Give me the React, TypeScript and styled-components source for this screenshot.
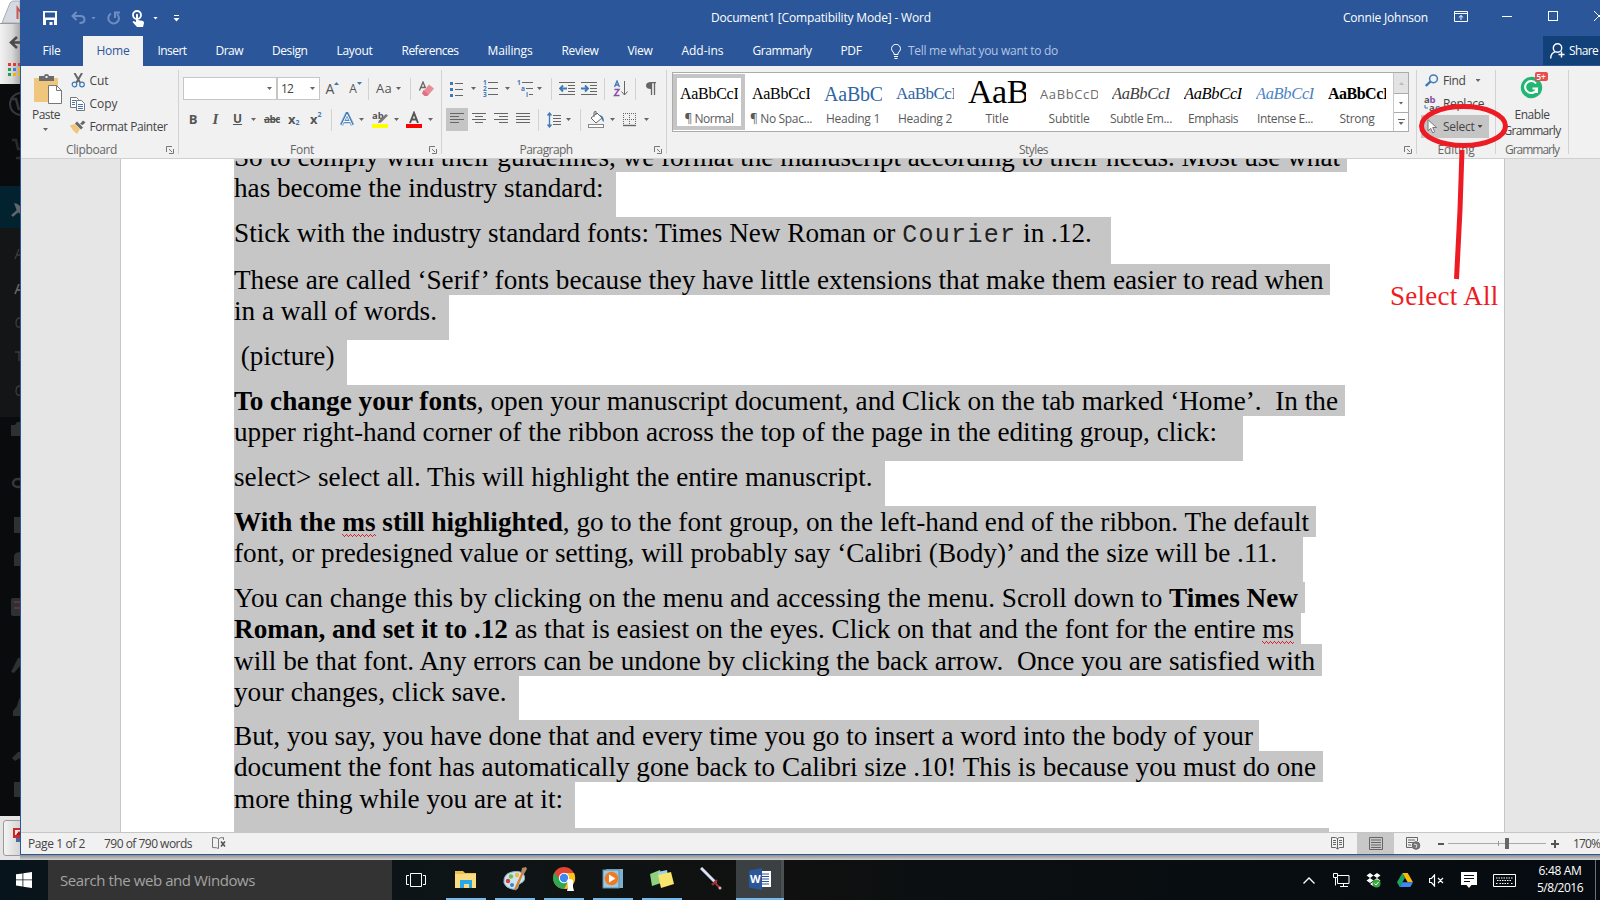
import React, { useLayoutEffect, useRef, useState } from 'react';
import styled, { createGlobalStyle, css } from 'styled-components';

const UI = `"Open Sans", "Noto Sans", sans-serif`;
const SERIF = `"Liberation Serif", serif`;
const BLUE = '#2b579a';

const Global = createGlobalStyle`
  * { box-sizing: border-box; }
  html, body { margin: 0; padding: 0; overflow: hidden; }
  body { font: 12px/16px ${UI}; color: #444; background: #0a0b0d; }
  svg { display: block; flex: none; }
`;

/* ---------- text that is tracked to a given advance width ---------- */
const FitBox = styled.span<{ $w: number }>`
  display: block;
  flex: none;
  width: ${(p) => p.$w}px;
  white-space: pre;
`;
const Fit = ({ w, children, className }: { w: number; children: React.ReactNode; className?: string }) => {
  const ref = useRef<HTMLSpanElement>(null);
  const [spacing, setSpacing] = useState(0);
  useLayoutEffect(() => {
    const el = ref.current;
    if (!el) return;
    const natural = el.getBoundingClientRect().width;
    const count = (el.textContent || '').length || 1;
    setSpacing((w - natural) / count);
  }, [w]);
  return (
    <FitBox $w={w} className={className}>
      <span ref={ref} style={{ letterSpacing: spacing }}>{children}</span>
    </FitBox>
  );
};

/* ---------- shell ---------- */
const Screen = styled.div`
  position: relative;
  width: 1600px;
  height: 900px;
  overflow: hidden;
  display: flex;
  flex-direction: column;
`;
const Desktop = styled.div`
  display: flex;
  height: 860px;
  background: linear-gradient(#8f8f8f, #d0d0d0) bottom / 100% 5px no-repeat;
`;
const Behind = styled.div`
  width: 20px;
  height: 860px;
  display: flex;
  flex-direction: column;
  overflow: hidden;
  background: #0a0b0d;
`;
const Word = styled.div`
  width: 1580px;
  height: 855px;
  display: flex;
  flex-direction: column;
  border-left: 1px solid ${BLUE};
  border-bottom: 1px solid ${BLUE};
  background: #f1f1f1;
  overflow: hidden;
`;

/* ---------- browser strip behind ---------- */
const TabStrip = styled.div`height: 24px; background: #fff; border-bottom: 1px solid #9a9a9a;`;
const BrowserBar = styled.div`
  height: 60px;
  background: linear-gradient(90deg, #f2f2f2, #d8d8d8 60%, #a8a8a8);
`;
const AdminMenu = styled.div`height: 732px; background: #0a0b0d;`;
const Downloads = styled.div`
  height: 44px;
  padding: 4px 0 4px 3px;
  background: #e4e4e4;
`;
const DownloadItem = styled.div`
  height: 36px;
  width: 30px;
  padding: 6px 0 0 9px;
  border: 1px solid #999;
  border-radius: 3px;
  background: linear-gradient(90deg, #f4f4f4, #bdbdbd);
`;

const BackgroundStrip = () => (
  <Behind>
    <TabStrip>
      <svg width="20" height="23"><path d="M2 23 L10 3 Q11 1 14 1 H20 V23Z" fill="#d5dae2" stroke="#a7abb3" /><path d="M17.500 19V8l3 4" fill="none" stroke="#c9574c" strokeWidth="2" /></svg>
    </TabStrip>
    <BrowserBar>
      <svg width="20" height="60"><path d="M17 13l-6 5.500 6 5.500M11 18.500h9" fill="none" stroke="#4a4a4a" strokeWidth="2.600" />
        {[0, 1, 2].map((r) => [0, 1, 2].map((c) => (
          <rect key={`${r}${c}`} x={8 + c * 5} y={39 + r * 5} width="3" height="3"
            fill={[['#e23b2e', '#e23b2e', '#e23b2e'], ['#1f9d57', '#3f7ee8', '#f2b400'], ['#1f9d57', '#f2b400', '#f2b400']][r][c]} />
        )))}
      </svg>
    </BrowserBar>
    <AdminMenu>
      <svg width="20" height="732">
        <rect y="102" width="20" height="42" fill="#03222f" />
        <rect y="144" width="20" height="189" fill="#131517" />
        <circle cx="21" cy="20" r="11" fill="none" stroke="#33373b" strokeWidth="2" />
        <path d="M12 15h4l3 11" fill="none" stroke="#33373b" strokeWidth="2.500" />
        <path d="M12 56h4l2 9h4M16 74h4" fill="none" stroke="#272b2f" strokeWidth="2.500" />
        <path d="M12 132l8-7" stroke="#60666a" strokeWidth="2.500" />
        <path d="M14 119q3 0 6 3v8l-3-3z" fill="#60666a" />
        <g fill="none" stroke="#3a3d40" strokeWidth="1.300">
          <path d="M15 175l4-10M17 171h3" /><path d="M15 210l4-10M17 206h3" stroke="#5d6063" strokeWidth="1.800" />
          <path d="M20 234q-4 0-4 5t4 4M15 268h5M19 268v9M20 302q-4 0-4 5t4 4" />
        </g>
        <g fill="#2d3134">
          <path d="M11 341h4l2-3h3v14h-9z" /><rect x="14" y="433" width="6" height="16" /><path d="M14 475q-1-7 6-7v14h-6z" />
          <rect x="11" y="514" width="10" height="18" rx="2" /><path d="M11 588l7-14h2v8l-6 7z" /><path d="M13 632v-5l4-5q2-8 3-8v18z" />
          <path d="M12 674l6-6h2v6l-5 3z" /><rect x="14" y="698" width="6" height="15" />
        </g>
        <ellipse cx="18" cy="399" rx="5" ry="4" fill="none" stroke="#34383c" strokeWidth="2.500" />
        <path d="M14 518h6M14 524h6" stroke="#70373a" strokeWidth="1.500" />
      </svg>
    </AdminMenu>
    <Downloads>
      <DownloadItem><svg width="10" height="18"><rect y="1" width="9" height="10" fill="#c92c27" /><rect x="2" y="3" width="6" height="5" fill="#f3e6df" /><path d="M3 8l3-4 3 4" fill="#a12" /><rect x="3" y="11" width="6" height="4" fill="#4d689f" /></svg></DownloadItem>
    </Downloads>
  </Behind>
);

/* ---------- title bar ---------- */
const TitleBar = styled.div`
  height: 36px;
  margin-left: -1px;
  padding-left: 1px;
  flex: none;
  display: flex;
  align-items: center;
  background: ${BLUE};
  color: #fff;
`;
const Slot = styled.div<{ $ml?: number; $w?: number; $dy?: number }>`
  flex: none;
  display: flex;
  align-items: center;
  justify-content: center;
  margin-left: ${(p) => p.$ml || 0}px;
  ${(p) => p.$w && css`width: ${p.$w}px;`}
  ${(p) => p.$dy && css`margin-top: ${p.$dy * 2}px;`}
`;
const Arrow = styled.i<{ $ml?: number; $c?: string }>`
  flex: none;
  width: 5px;
  height: 3px;
  margin-left: ${(p) => p.$ml || 0}px;
  background: ${(p) => p.$c || '#666'};
  clip-path: polygon(0 0, 100% 0, 50% 100%);
`;

const Title = () => (
  <TitleBar>
    <Slot $ml={22}><svg width="15" height="15"><path d="M0 0h14v14H0z" fill="#fff" /><path d="M2 1.500h10v5H2zM3 9h8v5H9.500v-3h-3v3H3z" fill={BLUE} /></svg></Slot>
    <Slot $ml={13}><svg width="15" height="14" fill="none" stroke="#6f8fc2" strokeWidth="2"><path d="M5.500 1L1.500 5l4 4M2 5h7.500q4 0 4 3.500t-5 3.500" /></svg></Slot>
    <Arrow $ml={5} $c="#6f8fc2" />
    <Slot $ml={11}><svg width="14" height="14" fill="none" stroke="#6f8fc2" strokeWidth="2"><path d="M4 2.500A5.300 5.300 0 1 0 10 3M8 7V1.500h5" /></svg></Slot>
    <Slot $ml={11}><svg width="13" height="17"><circle cx="5" cy="5" r="4" fill="none" stroke="#fff" strokeWidth="1.800" /><path d="M4 4.500q1-1.500 2 0V10l5 1q1 .5 1 2l-1 4H5l-4.500-5 1-1L4 12z" fill="#fff" /></svg></Slot>
    <Arrow $ml={8} $c="#fff" />
    <Slot $ml={15}><svg width="7" height="8"><path d="M1 1.500h5" stroke="#fff" /><path d="M.500 4h6l-3 3.500z" fill="#fff" /></svg></Slot>
    <Slot $ml={531}><Fit w={220}>Document1 [Compatibility Mode] - Word</Fit></Slot>
    <Slot $ml={412}><Fit w={85}>Connie Johnson</Fit></Slot>
    <Slot $ml={26} $dy={-2}><svg width="14" height="11" fill="none" stroke="#fff"><path d="M.500 .500h13v10H.500zM0 2.500h14M7 9V4.500M4.800 6.500L7 4.500l2.200 2" /></svg></Slot>
    <Slot $ml={34} $dy={-2}><svg width="10" height="1"><path d="M0 .5h10" stroke="#fff" /></svg></Slot>
    <Slot $ml={36} $dy={-2}><svg width="10" height="10"><rect x=".5" y=".5" width="9" height="9" fill="none" stroke="#fff" /></svg></Slot>
    <Slot $ml={36} $dy={-2}><svg width="10" height="10"><path d="M0 0l10 10M10 0L0 10" stroke="#fff" /></svg></Slot>
  </TitleBar>
);

/* ---------- tabs ---------- */
const TabBar = styled.div`
  height: 30px;
  flex: none;
  margin-left: -1px;
  padding-left: 8px;
  display: flex;
  background: ${BLUE};
`;
const Tab = styled.div<{ $active?: boolean; $gap?: number }>`
  display: flex;
  align-items: center;
  height: 30px;
  padding: 0 ${(p) => (p.$active ? 13.5 : 14.5)}px;
  margin-right: ${(p) => p.$gap || 0}px;
  color: ${(p) => (p.$active ? BLUE : '#fff')};
  background: ${(p) => (p.$active ? '#f1f1f1' : 'transparent')};
`;
const TellMe = styled.div`
  display: flex;
  align-items: center;
  gap: 7px;
  margin-left: 15px;
  color: #b3c5e3;
`;
const Share = styled.div`
  display: flex;
  align-items: center;
  gap: 4px;
  width: 57px;
  height: 29px;
  margin-left: auto;
  padding: 1px 0 0 7px;
  background: #124078;
  color: #fff;
`;
const tabs: [string, number][] = [
  ['File', 18], ['Home', 33], ['Insert', 29], ['Draw', 27.5], ['Design', 35.5], ['Layout', 36], ['References', 57],
  ['Mailings', 45], ['Review', 37], ['View', 25], ['Add-ins', 42], ['Grammarly', 59], ['PDF', 21],
];
const Tabs = () => (
  <TabBar>
    {tabs.map(([t, w]) => (
      <Tab key={t} $active={t === 'Home'} $gap={t === 'File' ? 8 : 0}><Fit w={w}>{t}</Fit></Tab>
    ))}
    <TellMe>
      <svg width="10" height="15" fill="none" stroke="#fff"><path d="M3 10.500V9Q.5 7 .5 4.800A4.300 4.300 0 0 1 9.500 4.800Q9.500 7 7 9v1.500zM3 12.500h4M3.500 14.500h3" /></svg>
      <Fit w={150}>Tell me what you want to do</Fit>
    </TellMe>
    <Share>
      <svg width="15" height="16" fill="none" stroke="#fff" strokeWidth="1.400"><circle cx="7.500" cy="5" r="4.200" /><path d="M.700 15.500q0-5 4.500-6.800M8.500 11.500h6M11.500 8.500v6" /></svg>
      <Fit w={29}>Share</Fit>
    </Share>
  </TabBar>
);

/* ---------- ribbon ---------- */
const Ribbon = styled.div`
  height: 93px;
  flex: none;
  display: flex;
  background: #f1f1f1;
  border-bottom: 1px solid #d0d0d0;
`;
const Group = styled.div<{ $w: number }>`
  width: ${(p) => p.$w}px;
  height: 92px;
  flex: none;
  display: flex;
  flex-direction: column;
`;
const GroupBody = styled.div<{ $row?: boolean }>`
  height: 76px;
  display: flex;
  flex-direction: ${(p) => (p.$row ? 'row' : 'column')};
`;
const GroupFoot = styled.div`
  height: 16px;
  display: flex;
  align-items: center;
  color: #666;
`;
const FootLabel = styled.div`flex: 1; display: flex; justify-content: center;`;
const FootLauncher = styled.div`width: 16px; padding: 0 0 0 4px;`;
const GroupEdge = styled.div`width: 1px; height: 84px; margin-top: 4px; flex: none; background: #d2d2d2;`;
const ToolRow = styled.div<{ $mt: number }>`
  height: 23px;
  margin-top: ${(p) => p.$mt}px;
  flex: none;
  display: flex;
  align-items: center;
`;
const Divider = styled.div<{ $ml: number }>`
  width: 1px;
  height: 22px;
  flex: none;
  margin-left: ${(p) => p.$ml}px;
  background: #d2d2d2;
`;
const Combo = styled.div<{ $w: number; $ml?: number }>`
  width: ${(p) => p.$w}px;
  height: 23px;
  margin-left: ${(p) => p.$ml || 0}px;
  padding: 0 4px 0 3px;
  display: flex;
  align-items: center;
  justify-content: space-between;
  border: 1px solid #c6c6c6;
  background: #fff;
`;
const Glyph = styled.span<{ $size?: number; $bold?: boolean; $italic?: boolean; $serif?: boolean; $line?: string }>`
  font-family: ${(p) => (p.$serif ? SERIF : UI)};
  font-size: ${(p) => p.$size || 13}px;
  font-weight: ${(p) => (p.$bold ? 700 : 400)};
  font-style: ${(p) => (p.$italic ? 'italic' : 'normal')};
  text-decoration: ${(p) => p.$line || 'none'};
  line-height: 16px;
  color: #555;
  white-space: nowrap;
`;
const SubGlyph = styled.span<{ $up?: boolean }>`
  font-size: 7px;
  font-weight: 700;
  line-height: 8px;
  color: #3f79b5;
  align-self: ${(p) => (p.$up ? 'flex-start' : 'flex-end')};
`;
const ScriptPair = styled.div<{ $ml: number }>`
  display: flex;
  width: 12px;
  height: 16px;
  flex: none;
  margin: -2px 0 0 ${(p) => p.$ml}px;
`;
const Launcher = () => (
  <FootLauncher><svg width="8" height="8" fill="none" stroke="#777"><path d="M.500 6V.500H6M3 3l3 3M7.500 3v4.500H3" /></svg></FootLauncher>
);
const Foot = ({ w, text, launch = true }: { w: number; text: string; launch?: boolean }) => (
  <GroupFoot><FootLabel><Fit w={w}>{text}</Fit></FootLabel>{launch && <Launcher />}</GroupFoot>
);

const PasteColumn = styled.div`
  width: 43px;
  padding: 8px 0 0 11px;
  display: flex;
  flex-direction: column;
`;
const PasteLabel = styled.div`margin: 2px 0 5px;`;
const CommandColumn = styled.div<{ $ml?: number }>`
  margin: 3px 0 0 ${(p) => p.$ml || 0}px;
  display: flex;
  flex-direction: column;
`;
const Command = styled.div<{ $on?: boolean; $pad: number; $w?: number }>`
  height: 23px;
  ${(p) => p.$w && css`width: ${p.$w}px;`}
  padding-left: ${(p) => p.$pad}px;
  display: flex;
  align-items: center;
  background: ${(p) => (p.$on ? '#c5c5c5' : 'transparent')};
`;
const CommandIcon = styled.div<{ $w: number }>`width: ${(p) => p.$w}px; flex: none;`;

const Clipboard = () => (
  <Group $w={157}>
    <GroupBody $row>
      <PasteColumn>
        <svg width="31" height="31">
          <path d="M2 4h24v24H2z" fill="#efc67c" /><path d="M7 2h5q0-2 2.500-2T17 2h5v5H7z" fill="#6b6b6b" /><rect x="13.500" y="2" width="2" height="2" fill="#f1f1f1" />
          <path d="M16.500 11.500h8l5 5v13h-13z" fill="#fff" stroke="#777" /><path d="M24.500 11.500v5h5" fill="none" stroke="#777" />
        </svg>
        <PasteLabel><Fit w={28}>Paste</Fit></PasteLabel>
        <Arrow $ml={11} />
      </PasteColumn>
      <CommandColumn>
        <Command $pad={6.5}>
          <CommandIcon $w={19}><svg width="15" height="15" fill="none"><path d="M3.500 0l5.500 9.500M11 0L5.500 9.500" stroke="#666" strokeWidth="2" /><circle cx="3.500" cy="11.500" r="2.300" stroke="#3f79b5" strokeWidth="1.200" /><circle cx="11" cy="11.500" r="2.300" stroke="#3f79b5" strokeWidth="1.200" /></svg></CommandIcon>
          <Fit w={19}>Cut</Fit>
        </Command>
        <Command $pad={6}>
          <CommandIcon $w={19.5}><svg width="16" height="14"><path d="M.500 .500h6l2 2v8H.500z" fill="#fff" stroke="#777" /><path d="M2 3.500h4M2 5.500h3M2 7.500h3" stroke="#3f79b5" /><path d="M6.500 3.500h5l3 3v7h-8z" fill="#fff" stroke="#777" /><path d="M8 7.500h5M8 9.500h5M8 11.500h5" stroke="#3f79b5" /></svg></CommandIcon>
          <Fit w={28}>Copy</Fit>
        </Command>
        <Command $pad={6}>
          <CommandIcon $w={19.5}><svg width="16" height="14"><path d="M1 5l4-1 5 5-3 5q-4-3-7-8z" fill="#efc67c" /><path d="M5 3.500l2-2 6 6-2 2zM10 4l3-3.500 2.500 2L12.500 5z" fill="#666" /></svg></CommandIcon>
          <Fit w={78}>Format Painter</Fit>
        </Command>
      </CommandColumn>
    </GroupBody>
    <Foot w={51} text="Clipboard" />
  </Group>
);

const FontGroup = () => (
  <Group $w={262}>
    <GroupBody>
      <ToolRow $mt={11}>
        <Combo $w={94} $ml={4}><span /><Arrow /></Combo>
        <Combo $w={43}><Fit w={12}>12</Fit><Arrow /></Combo>
        <Slot $ml={6} $w={13}><Glyph $size={14}>A</Glyph><svg width="5" height="14"><path d="M0 3h5l-2.500-3z" fill="#3f79b5" /></svg></Slot>
        <Slot $ml={10} $w={13}><Glyph $size={12}>A</Glyph><svg width="5" height="14"><path d="M0 0h5L2.500 3z" fill="#3f79b5" /></svg></Slot>
        <Divider $ml={6} />
        <Slot $ml={7} $w={16} $dy={-0.5}><Glyph><Fit w={16}>Aa</Fit></Glyph></Slot>
        <Arrow $ml={4} />
        <Divider $ml={9} />
        <Slot $ml={8}><svg width="16" height="16"><path d="M.500 9.500L4 1l2.500 6M2 6.500h4" fill="none" stroke="#666" strokeWidth="1.300" /><path d="M10 3.500l5 4-5.500 6.500-5-4z" fill="#ea8b98" /><path d="M4.500 9l5 4.500-1 1.500h-3L3 12.500z" fill="#e0707f" /></svg></Slot>
      </ToolRow>
      <ToolRow $mt={8}>
        <Slot $ml={10} $w={8} $dy={-1}><Glyph $bold>B</Glyph></Slot>
        <Slot $ml={15} $w={7} $dy={-1}><Glyph $italic $bold $serif $size={15}>I</Glyph></Slot>
        <Slot $ml={14} $w={9} $dy={-1}><Glyph $bold $line="underline" $size={12}>U</Glyph></Slot>
        <Arrow $ml={9} />
        <Slot $ml={8} $w={16} $dy={-0.5}><Glyph $bold $size={10} $line="line-through"><Fit w={16}>abc</Fit></Glyph></Slot>
        <ScriptPair $ml={8}><Glyph $bold>x</Glyph><SubGlyph>2</SubGlyph></ScriptPair>
        <ScriptPair $ml={10}><Glyph $bold>x</Glyph><SubGlyph $up>2</SubGlyph></ScriptPair>
        <Divider $ml={9} />
        <Slot $ml={8} $w={14}><svg width="14" height="15" fill="none"><path d="M1.500 13L7 1.500 12.500 13M4 9.500h6" stroke="#a9c6e6" strokeWidth="4" /><path d="M1.500 13L7 1.500 12.500 13M4 9.500h6" stroke="#3f79b5" strokeWidth="2.600" /><path d="M2 13L7 2.500 12 13M4 9.500h6" stroke="#fff" strokeWidth="1" /></svg></Slot>
        <Arrow $ml={5} />
        <Slot $ml={8}><svg width="16" height="17"><text x="0" y="8" fontSize="9.500" fontWeight="700" fill="#555">ab</text><path d="M14 3l2 1.500-7 7-3 .5 1-2.500z" fill="#777" /><rect y="13" width="16" height="4" fill="#ff0" /></svg></Slot>
        <Arrow $ml={6} />
        <Slot $ml={7}><svg width="16" height="17"><path d="M4 12L8 2l4 10M5.500 8.500h5" fill="none" stroke="#555" strokeWidth="2" /><rect y="13" width="16" height="4" fill="#f00" /></svg></Slot>
        <Arrow $ml={6} />
      </ToolRow>
    </GroupBody>
    <Foot w={24} text="Font" />
  </Group>
);

const Lines = ({ xs }: { xs: [number, number][] }) => (
  <svg width="14" height="13" stroke="#666"><path d={xs.map(([a, b], i) => `M${a} ${i * 3 + 0.5}H${b}`).join('')} /></svg>
);
const Pressed = styled.div`
  width: 22px;
  height: 23px;
  margin-left: 4px;
  display: flex;
  align-items: center;
  justify-content: center;
  background: #c5c5c5;
`;

const Paragraph = () => (
  <Group $w={224}>
    <GroupBody>
      <ToolRow $mt={11}>
        <Slot $ml={8}><svg width="14" height="16"><path d="M5 2.500h8M5 8.500h8M5 14.500h8" stroke="#666" /><g fill="#3f79b5"><rect y="1" width="3" height="3" /><rect y="7" width="3" height="3" /><rect y="13" width="3" height="3" /></g></svg></Slot>
        <Arrow $ml={7} />
        <Slot $ml={7}><svg width="15" height="17"><path d="M5 2.500h10M5 8.500h10M5 14.500h10" stroke="#666" /><g fill="#3f79b5" fontSize="6.500" fontWeight="700"><text y="5">1</text><text y="11">2</text><text y="17">3</text></g></svg></Slot>
        <Arrow $ml={7} />
        <Slot $ml={7}><svg width="17" height="17"><path d="M5 2.500h11M9 8.500h7M12 14.500h4" stroke="#666" /><g fill="#3f79b5" fontSize="6.500" fontWeight="700"><text y="5">1</text><text x="4" y="11">a</text><text x="9" y="17">i</text></g></svg></Slot>
        <Arrow $ml={3} />
        <Divider $ml={9} />
        <Slot $ml={7}><svg width="17" height="14"><path d="M0 .500h16M9 3.500h7M9 6.500h7M9 9.500h7M0 12.500h16" stroke="#666" /><path d="M4 3.500L1 6.500l3 3M1 6.500h7" stroke="#3f79b5" strokeWidth="1.800" fill="none" /></svg></Slot>
        <Slot $ml={5}><svg width="17" height="14"><path d="M0 .500h16M9 3.500h7M9 6.500h7M9 9.500h7M0 12.500h16" stroke="#666" /><path d="M4 3.500l3 3-3 3M7 6.500H0" stroke="#3f79b5" strokeWidth="1.800" fill="none" /></svg></Slot>
        <Divider $ml={6} />
        <Slot $ml={8}><svg width="15" height="17"><path d="M1.500 7L4 1l2.500 6M2 5h4" stroke="#3f79b5" strokeWidth="1.300" fill="none" /><path d="M1.500 9.500h4.500L1.500 15.500h5" stroke="#8b4ba8" strokeWidth="1.400" fill="none" /><path d="M11.500 1v14M8.500 11.500l3 3.500 3-3.500" stroke="#666" fill="none" /></svg></Slot>
        <Divider $ml={7} />
        <Slot $ml={10}><svg width="11" height="14"><path d="M5 7Q0 7 0 3.500T5 0h5v1.200H5z" fill="#666" /><path d="M5.500 1v12M8.500 1v12" stroke="#666" strokeWidth="1.300" /></svg></Slot>
      </ToolRow>
      <ToolRow $mt={8}>
        <Pressed><Lines xs={[[0, 14], [0, 9], [0, 14], [0, 9]]} /></Pressed>
        <Slot $ml={4}><Lines xs={[[0, 14], [3, 11], [0, 14], [3, 11]]} /></Slot>
        <Slot $ml={8}><Lines xs={[[0, 14], [5, 14], [0, 14], [5, 14]]} /></Slot>
        <Slot $ml={8}><Lines xs={[[0, 14], [0, 14], [0, 14], [0, 14]]} /></Slot>
        <Divider $ml={8} />
        <Slot $ml={8}><svg width="15" height="16"><path d="M6 3.500h8M6 6.500h8M6 9.500h8M6 12.500h8" stroke="#666" /><path d="M2.500 1v14M.500 3.500l2-2.500 2 2.500M.500 12.500l2 2.500 2-2.500" stroke="#3f79b5" strokeWidth="1.300" fill="none" /></svg></Slot>
        <Arrow $ml={4} />
        <Divider $ml={9} />
        <Slot $ml={7}><svg width="17" height="17"><path d="M3 7l6-5 5 5-6 5z" fill="#fff" stroke="#666" /><path d="M6 6V2q0-2 2-1.500V4" stroke="#666" fill="none" /><path d="M11 4q5 0 5 7-3-2-2-4z" fill="#3f79b5" /><rect x=".5" y="13.500" width="15" height="3" fill="#fff" stroke="#888" /></svg></Slot>
        <Arrow $ml={5} />
        <Slot $ml={8}><svg width="14" height="14" stroke="#666"><path d="M.500 0v12M6.500 0v12M12.500 0v12M0 .500h13M0 6.500h13" strokeDasharray="1 1" /><path d="M0 12.500h13" strokeWidth="1.400" /></svg></Slot>
        <Arrow $ml={7} />
      </ToolRow>
    </GroupBody>
    <Foot w={53} text="Paragraph" />
  </Group>
);

const Gallery = styled.div`
  width: 737px;
  height: 60px;
  margin: 6px 0 0 5px;
  display: flex;
  border: 1px solid #ababab;
  background: #fff;
`;
const StyleCell = styled.div<{ $on?: boolean }>`
  width: 72px;
  height: 56px;
  margin-top: 1px;
  flex: none;
  display: flex;
  flex-direction: column;
  align-items: center;
  border: 4px solid ${(p) => (p.$on ? '#c5c5c5' : 'transparent')};
`;
const Sample = styled.div<{ $size: number; $color?: string; $variant?: string; $sans?: boolean }>`
  width: 58px;
  height: 25px;
  flex: none;
  margin-top: 3px;
  overflow: hidden;
  display: flex;
  align-items: flex-end;
  font-family: ${(p) => (p.$sans ? UI : SERIF)};
  font-size: ${(p) => p.$size}px;
  line-height: ${(p) => (p.$size > 20 ? 29 : 18)}px;
  padding-bottom: ${(p) => (p.$size > 20 ? 0 : 3)}px;
  color: ${(p) => p.$color || '#000'};
  font-style: ${(p) => (p.$variant === 'italic' ? 'italic' : 'normal')};
  font-weight: ${(p) => (p.$variant === 'bold' ? 700 : 400)};
`;
const StyleName = styled.div`
  height: 16px;
  flex: none;
  margin-top: 5px;
  color: #595959;
`;
const GalleryFill = styled.div`flex: 1;`;
const GalleryScroll = styled.div`
  width: 15px;
  border-left: 1px solid #c6c6c6;
  display: flex;
  flex-direction: column;
`;
const ScrollStep = styled.div<{ $h: number; $off?: boolean }>`
  height: ${(p) => p.$h}px;
  display: flex;
  flex-direction: column;
  gap: 2px;
  align-items: center;
  justify-content: center;
  background: ${(p) => (p.$off ? '#e3e3e3' : '#fff')};
  & + & { border-top: 1px solid #ababab; }
`;
const MoreBar = styled.i`width: 7px; height: 1px; background: #666;`;
const UpArrow = styled(Arrow)`transform: rotate(180deg);`;

type StyleDef = { n: string; nw: number; t: string; tw: number; s: number; c?: string; v?: string; sans?: boolean };
const styleDefs: StyleDef[] = [
  { n: '¶ Normal', nw: 49, t: 'AaBbCcI', tw: 58.5, s: 16 },
  { n: '¶ No Spac...', nw: 62, t: 'AaBbCcI', tw: 58.5, s: 16 },
  { n: 'Heading 1', nw: 54, t: 'AaBbC', tw: 59, s: 20, c: '#2e66a4' },
  { n: 'Heading 2', nw: 54, t: 'AaBbCcI', tw: 60.5, s: 17, c: '#2e66a4' },
  { n: 'Title', nw: 23, t: 'AaB', tw: 61, s: 34 },
  { n: 'Subtitle', nw: 41, t: 'AaBbCcD', tw: 60, s: 13, c: '#6b6b6b', sans: true },
  { n: 'Subtle Em...', nw: 62, t: 'AaBbCcI', tw: 58, s: 16.5, c: '#404040', v: 'italic' },
  { n: 'Emphasis', nw: 50, t: 'AaBbCcI', tw: 58, s: 16.5, v: 'italic' },
  { n: 'Intense E...', nw: 56, t: 'AaBbCcI', tw: 58, s: 16.5, c: '#4c85c4', v: 'italic' },
  { n: 'Strong', nw: 35, t: 'AaBbCcI', tw: 60.5, s: 16, v: 'bold' },
];

const Styles = () => (
  <Group $w={749}>
    <GroupBody>
      <Gallery>
        {styleDefs.map((d, i) => (
          <StyleCell key={d.n} $on={i === 0}>
            <Sample $size={d.s} $color={d.c} $variant={d.v} $sans={d.sans}><Fit w={d.tw}>{d.t}</Fit></Sample>
            <StyleName><Fit w={d.nw}>{d.n}</Fit></StyleName>
          </StyleCell>
        ))}
        <GalleryFill />
        <GalleryScroll>
          <ScrollStep $h={20} $off><UpArrow $c="#bbb" /></ScrollStep>
          <ScrollStep $h={19}><Arrow /></ScrollStep>
          <ScrollStep $h={19}><MoreBar /><Arrow /></ScrollStep>
        </GalleryScroll>
      </Gallery>
    </GroupBody>
    <Foot w={29} text="Styles" />
  </Group>
);

const Editing = () => (
  <Group $w={78}>
    <GroupBody>
      <CommandColumn $ml={4}>
        <Command $pad={4}>
          <CommandIcon $w={18}><svg width="14" height="13" fill="none" stroke="#3f79b5"><circle cx="8.500" cy="4.800" r="3.900" strokeWidth="1.500" /><path d="M5.500 7.500L.800 12" strokeWidth="2.400" /></svg></CommandIcon>
          <Fit w={22.5}>Find</Fit><Arrow $ml={10} />
        </Command>
        <Command $pad={3}>
          <CommandIcon $w={19}><svg width="17" height="16" fontSize="9.500" fontWeight="700"><text x="0" y="7" fill="#555">a</text><text x="5.500" y="7" fill="#8b4ba8">b</text><text x="5" y="15" fill="#555">a</text><text x="11" y="15" fill="#3f79b5">c</text><path d="M1 9v3h3" fill="none" stroke="#3f79b5" /></svg></CommandIcon>
          <Fit w={41}>Replace</Fit>
        </Command>
        <Command $pad={6} $on $w={68}>
          <CommandIcon $w={16}><svg width="11" height="15"><path d="M1 .800v11l2.700-2.500 2 4.500 2-1-2-4.300H9.500z" fill="#fff" stroke="#777" /></svg></CommandIcon>
          <Fit w={31.5}>Select</Fit><Arrow $ml={3} $c="#444" />
        </Command>
      </CommandColumn>
    </GroupBody>
    <Foot w={37} text="Editing" launch={false} />
  </Group>
);

const GrammarlyBody = styled.div`
  display: flex;
  flex-direction: column;
  align-items: center;
  padding-top: 5px;
`;
const Grammarly = () => (
  <Group $w={72}>
    <GroupBody>
      <GrammarlyBody>
        <svg width="36" height="29">
          <circle cx="17.500" cy="16.500" r="10.700" fill="#23b574" />
          <path d="M22 12.500a6 6 0 1 0 1 5h-4.500M23 17v5" fill="none" stroke="#fff" strokeWidth="2" />
          <rect x="21" y="1" width="13" height="9" rx="2" fill="#e5504f" /><text x="22.500" y="8.600" fontSize="8" fontWeight="600" fill="#fff">5+</text>
        </svg>
        <Slot $dy={3.5}><Fit w={35}>Enable</Fit></Slot>
        <Fit w={57}>Grammarly</Fit>
      </GrammarlyBody>
    </GroupBody>
    <Foot w={54} text="Grammarly" launch={false} />
  </Group>
);

/* ---------- document ---------- */
const Canvas = styled.div`
  height: 673px;
  flex: none;
  padding-left: 99px;
  overflow: hidden;
  background: #e6e6e6;
`;
const Page = styled.div`
  width: 1385px;
  height: 691px;
  margin-top: -18px;
  padding-left: 113px;
  border: solid #c6c6c6;
  border-width: 0 1px;
  background: #fff;
`;
const Line = styled.div<{ $w: number; $h: number; $lead: number }>`
  width: ${(p) => p.$w}px;
  height: ${(p) => p.$h}px;
  background: #c6c6c6;
  color: #000;
  font-family: ${SERIF};
  font-size: 27.200px;
  line-height: ${(p) => p.$lead}px;
`;
const Mono = styled.span`
  font-family: "Liberation Mono", monospace;
  font-size: 25px;
  letter-spacing: 1.300px;
  line-height: 20px;
  color: #222;
`;
const Typo = styled.span`
  position: relative;
  &::after {
    content: '';
    position: absolute;
    left: 0;
    right: 0;
    bottom: 0;
    height: 3px;
    background:
      repeating-linear-gradient(90deg, #d8232a 0 1px, transparent 1px 4px) 0 0 / 100% 1px no-repeat,
      repeating-linear-gradient(90deg, transparent 0 1px, #d8232a 1px 2px) 0 1px / 100% 1px no-repeat,
      repeating-linear-gradient(90deg, transparent 0 2px, #d8232a 2px 3px, transparent 3px 4px) 0 2px / 100% 1px no-repeat;
  }
`;

/* text, right end of the text, right end of the selection, height, line-height */
const lines: [React.ReactNode, number, number, number, number?][] = [
  ['So to comply with their guidelines, we format the manuscript according to their needs. Most use what', 1340, 1347, 31],
  ['has become the industry standard:', 603.5, 616, 45],
  [<>Stick with the industry standard fonts: Times New Roman or <Mono>Courier</Mono> in .12.</>, 1092, 1111, 47],
  ['These are called ‘Serif’ fonts because they have little extensions that make them easier to read when', 1323.5, 1330, 31],
  ['in a wall of words.', 437, 449, 45],
  [' (picture)', 334.5, 347, 45],
  [<><b>To change your fonts</b>, open your manuscript document, and Click on the tab marked ‘Home’.  In the</>, 1338, 1345, 31],
  ['upper right-hand corner of the ribbon across the top of the page in the editing group, click:', 1217, 1243, 45],
  ['select> select all. This will highlight the entire manuscript.', 872.5, 885, 45],
  [<><b>With the <Typo>ms</Typo> still highlighted</b>, go to the font group, on the left-hand end of the ribbon. The default</>, 1309, 1316, 31],
  ['font, or predesigned value or setting, will probably say ‘Calibri (Body)’ and the size will be .11.', 1277, 1303, 45],
  [<>You can change this by clicking on the menu and accessing the menu. Scroll down to <b>Times New</b></>, 1298, 1305, 31],
  [<><b>Roman, and set it to .12</b> as that is easiest on the eyes. Click on that and the font for the entire <Typo>ms</Typo></>, 1294, 1301, 31],
  ['will be that font. Any errors can be undone by clicking the back arrow.  Once you are satisfied with', 1315, 1322, 32, 34],
  ['your changes, click save.', 506.5, 519, 44],
  ['But, you say, you have done that and every time you go to insert a word into the body of your', 1253, 1259, 31],
  ['document the font has automatically gone back to Calibri size .10! This is because you must do one', 1316, 1323, 31],
  ['more thing while you are at it:', 563, 575, 46, 34],
  ['', 1322, 1329, 10],
];

/* ---------- status bar ---------- */
const StatusBar = styled.div`
  height: 22px;
  flex: none;
  display: flex;
  align-items: center;
  padding-left: 7px;
  border-top: 1px solid #c6c6c6;
  background: #f1f1f1;
`;
const ViewOn = styled.div`
  width: 38px;
  height: 21px;
  margin-left: 12px;
  display: flex;
  align-items: center;
  justify-content: center;
  background: #c8c8c8;
`;
const ZoomTrack = styled.div`
  width: 100px;
  height: 11px;
  margin-left: 4px;
  display: flex;
  align-items: center;
  background: linear-gradient(#aaa, #aaa) center / 100% 1px no-repeat;
`;
const ZoomTick = styled.i`width: 1px; height: 5px; margin-left: 50px; background: #999;`;
const ZoomThumb = styled.i`width: 4px; height: 11px; margin-left: 6px; background: #666;`;

const Status = () => (
  <StatusBar>
    <Fit w={57}>Page 1 of 2</Fit>
    <Slot $ml={19}><Fit w={88}>790 of 790 words</Fit></Slot>
    <Slot $ml={20} $dy={-0.5}><svg width="15" height="13" fill="none" stroke="#777"><path d="M6.500 11.500q-1-1-6-1V.500q5 0 6 1.500zM6.500 2q1-1.500 5-1.500V3" /><path d="M9 4.500l4 5M13 4.500l-4 5" stroke="#555" strokeWidth="1.600" /></svg></Slot>
    <Slot $ml={1104} $dy={-0.5}><svg width="14" height="13" fill="none" stroke="#666"><path d="M6.500 12v-10.500L4.500 .500H.500v10h4zM6.500 12l2-1.500h4V.500h-4l-2 1M2 3.500h3M2 5.500h3M2 7.500h3M8 3.500h3M8 5.500h3M8 7.500h3" /></svg></Slot>
    <ViewOn><svg width="14" height="13" fill="none" stroke="#666"><path d="M.500 .500h13v12H.500zM2 3h10M2 5.500h10M2 8h10M2 10.500h10" /></svg></ViewOn>
    <Slot $ml={12}><svg width="15" height="14" fill="none" stroke="#666"><path d="M6 10.500H.500V.500h11V4M2 3h7M2 5.500h5M2 8h3" /><circle cx="10" cy="8.500" r="3.800" fill="#777" /><path d="M8 7l3 1-1 3" stroke="#ddd" /></svg></Slot>
    <Slot $ml={17}><svg width="6" height="2"><rect width="6" height="2" fill="#555" /></svg></Slot>
    <ZoomTrack><ZoomTick /><ZoomThumb /></ZoomTrack>
    <Slot $ml={5}><svg width="8" height="8"><path d="M4 0v8M0 4h8" stroke="#555" strokeWidth="2" /></svg></Slot>
    <Slot $ml={14}><Fit w={27}>170%</Fit></Slot>
  </StatusBar>
);

/* ---------- taskbar ---------- */
const TaskBar = styled.div`
  height: 40px;
  display: flex;
  background: linear-gradient(90deg, #08141b, #0e1416 30%, #10110f 48%, #0b0f12 60%, #050b10);
  color: #fff;
`;
const StartButton = styled.div`width: 48px; display: flex; align-items: center; justify-content: center;`;
const Search = styled.div`
  width: 344px;
  padding-left: 12px;
  display: flex;
  align-items: center;
  background: #333;
  color: #a3a3a3;
  font-size: 15px;
  line-height: 20px;
`;
const TaskItem = styled.div<{ $open?: boolean; $active?: boolean; $w?: number; $mr?: number }>`
  width: ${(p) => p.$w || 40}px;
  margin-right: ${(p) => p.$mr ?? 9}px;
  display: flex;
  align-items: center;
  justify-content: center;
  border-bottom: 2px solid ${(p) => (p.$open ? '#76b9ed' : 'transparent')};
  background: ${(p) => (p.$active ? 'linear-gradient(90deg, #3b4143 44px, #25292b 44px, #4b5052 45px)' : 'none')};
  background-clip: padding-box;
`;
const Tray = styled.div`margin-left: auto; display: flex; align-items: center;`;
const Clock = styled.div`
  width: 52px;
  margin: -1px 0 0 18px;
  display: flex;
  flex-direction: column;
  align-items: center;
  gap: 1px;
`;
const PeekEdge = styled.div`width: 5px; height: 40px; margin-left: 9px; border-left: 1px solid #6d7174;`;

const Tasks = () => (
  <TaskBar>
    <StartButton><svg width="16" height="16" fill="#fff"><path d="M0 2.300l6.500-.9v6.100H0zM7.300 1.200L16 0v7.500H7.300zM0 8.300h6.500v6.200L0 13.600zM7.300 8.300H16V16l-8.700-1.200z" /></svg></StartButton>
    <Search><Fit w={195}>Search the web and Windows</Fit></Search>
    <Slot $ml={14} $w={20}><svg width="20" height="14" fill="none" stroke="#fff"><path d="M4.500 .500h11v13h-11zM3 2.500H.500v9H3M17 2.500h2.500v9H17" /></svg></Slot>
    <Slot $ml={20} />
    <TaskItem $open><svg width="22" height="19"><path d="M0 1h8l2 2h11v15H0z" fill="#f0c04e" /><path d="M0 4h21v14H0z" fill="#fcdc80" /><path d="M5 18V10h12v8h-3v-4H9v4z" fill="#2aa7e8" /></svg></TaskItem>
    <TaskItem $open><svg width="24" height="24"><path d="M1 16Q0 7 9 5t12 3q2 6-3 8-3 1-3 4t-6 2-8-6z" fill="#cfe3f0" stroke="#8eb2c9" /><circle cx="5" cy="14" r="2.200" fill="#d33f3a" /><circle cx="8" cy="9.500" r="2.200" fill="#6cc04a" /><circle cx="14" cy="8" r="2.200" fill="#efb73e" /><circle cx="9" cy="18" r="2" fill="#3a83d0" /><path d="M12 23L20 5" stroke="#d9822b" strokeWidth="2.200" /><path d="M18 6l1-5 4-1 1 2-3 5z" fill="#b58a5c" /></svg></TaskItem>
    <TaskItem $open>
      <svg width="24" height="26"><circle cx="12" cy="12" r="11" fill="#e24436" /><path d="M2.500 6.500A11 11 0 0 0 12 23l5-8.500H8z" fill="#2da94f" /><path d="M12 23A11 11 0 0 0 22 7H12l5 7z" fill="#fbc116" /><circle cx="12" cy="12" r="5.200" fill="#fff" /><circle cx="12" cy="12" r="4.200" fill="#4285f4" /><path d="M15 14q3-2 6 0v7l1 4h-7l1-4z" fill="#fff" /></svg>
    </TaskItem>
    <TaskItem $open><svg width="22" height="22"><rect x="4" y="1" width="17" height="19" fill="#7fb0cd" /><rect x="1" y="2" width="16" height="18" fill="#9dc8df" stroke="#5c8eac" /><circle cx="9.500" cy="10.500" r="6.800" fill="#ee7b22" /><path d="M7 6.500v8l6.500-4z" fill="#fff" /></svg></TaskItem>
    <TaskItem $open><svg width="26" height="20"><path d="M1 5l10-4 4 12-12 4z" fill="#8fd17e" /><path d="M9 3l9-2 2 12-9 2z" fill="#9ed2ee" /><path d="M9 6l13-3 3 12-13 4z" fill="#f8e56b" /></svg></TaskItem>
    <TaskItem $mr={5}><svg width="24" height="24"><path d="M2 1l15 15" stroke="#d9e2ec" strokeWidth="3" /><path d="M1 2l15 15" stroke="#5f7da8" strokeWidth="1" /><path d="M13 18l5-5M16 16l5 5" stroke="#9c2f33" strokeWidth="2.200" /><circle cx="21" cy="21" r="1.500" fill="#d9b0a8" /></svg></TaskItem>
    <TaskItem $open $active $w={48} $mr={0}>
      <svg width="23" height="22"><rect x="11" y="3" width="11" height="16" fill="#fff" /><path d="M13 6h7M13 8.500h7M13 11h7M13 13.500h7M13 16h7" stroke="#2b579a" /><path d="M0 2.500L13 0v22L0 19.500z" fill="#2b579a" /><text x="1" y="15" fontSize="11" fontWeight="700" fill="#fff">W</text></svg>
    </TaskItem>
    <Tray>
      <svg width="12" height="7"><path d="M.500 6.500L6 1l5.500 5.500" fill="none" stroke="#fff" strokeWidth="1.300" /></svg>
      <Slot $ml={18}><svg width="17" height="14" fill="none" stroke="#fff"><path d="M5 2.500h11v8H4.500V5M7 13.500h8M10.500 10.500v3M.500 .500h4v4h-4zM2.500 4.500v8" /></svg></Slot>
      <Slot $ml={16}><svg width="15" height="15"><path d="M4 0l3.500 2.500L4 5 .500 2.500zM11 0l3.500 2.500L11 5 7.500 2.500zM4 5l3.500 2.500L4 10 .500 7.500zM11 5l3.500 2.500L11 10 7.500 7.500zM4 11l3.500-2.500L10 11l-3 2z" fill="#fff" /><circle cx="10.500" cy="10.500" r="4" fill="#37a83d" /><path d="M8.500 10.500l1.500 1.500 2.500-3" stroke="#fff" fill="none" /></svg></Slot>
      <Slot $ml={16}><svg width="16" height="14"><path d="M5.300 0h5.400L16 9.300h-5.300z" fill="#fbbc05" /><path d="M5.300 0L0 9.300 2.700 14 8 4.700z" fill="#1da462" /><path d="M5.300 9.300H16L13.300 14H2.700z" fill="#4285f4" /></svg></Slot>
      <Slot $ml={16}><svg width="15" height="13" fill="none" stroke="#fff"><path d="M.500 4.500h2l3-3.500v11l-3-3.500h-2zM9 4l5 5M14 4L9 9" strokeWidth="1.200" /></svg></Slot>
      <Slot $ml={17}><svg width="16" height="16"><path d="M0 0h16v13h-5.500L8 16l-2.500-3H0z" fill="#fff" /><path d="M3 3.500h10M3 6.500h10M3 9.500h6" stroke="#0b0f12" /></svg></Slot>
      <Slot $ml={16}><svg width="23" height="13" fill="none" stroke="#fff"><path d="M.500 .500h22v12H.500z" /><path d="M3 4h17M4 6.500h15M3 9.500h2M6.500 9.500h10M18 9.500h2" strokeDasharray="1.500 1" /></svg></Slot>
      <Clock><Fit w={43}>6:48 AM</Fit><Fit w={46}>5/8/2016</Fit></Clock>
      <PeekEdge />
    </Tray>
  </TaskBar>
);

/* ---------- red mark-up over the window ---------- */
const MarkUp = styled.div`
  position: absolute;
  left: 1385px;
  top: 100px;
  width: 130px;
  color: #ed1c24;
  font: 27px/30px ${SERIF};
`;
const MarkUpText = styled.div`margin: -1px 0 0 5px;`;

export default function App() {
  return (
    <Screen>
      <Global />
      <Desktop>
        <BackgroundStrip />
        <Word>
          <Title />
          <Tabs />
          <Ribbon>
            <Clipboard /><GroupEdge />
            <FontGroup /><GroupEdge />
            <Paragraph /><GroupEdge />
            <Styles /><GroupEdge />
            <Editing /><GroupEdge />
            <Grammarly /><GroupEdge />
          </Ribbon>
          <Canvas>
            <Page>
              {lines.map(([text, end, right, h, lead = 32], i) => (
                <Line key={i} $w={right - 234} $h={h} $lead={lead}><Fit w={end - 234}>{text}</Fit></Line>
              ))}
            </Page>
          </Canvas>
          <Status />
        </Word>
      </Desktop>
      <Tasks />
      <MarkUp>
        <svg width="130" height="182" fill="none" stroke="#ed1c24">
          <ellipse cx="78.500" cy="26" rx="42" ry="19.500" strokeWidth="5" />
          <path d="M77 50L75 110L71.500 179" strokeWidth="5" />
        </svg>
        <MarkUpText><Fit w={108.5}>Select All</Fit></MarkUpText>
      </MarkUp>
    </Screen>
  );
}
